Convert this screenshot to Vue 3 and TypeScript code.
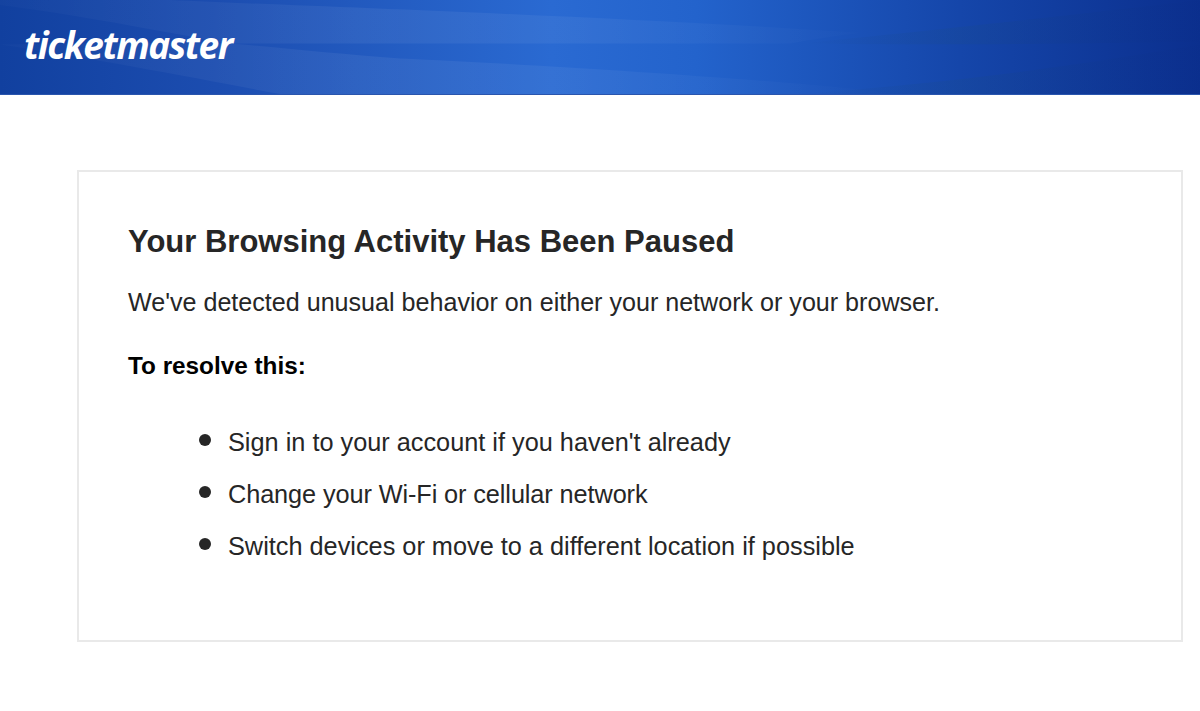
<script setup lang="ts">
const steps = [
  "Sign in to your account if you haven't already",
  'Change your Wi-Fi or cellular network',
  'Switch devices or move to a different location if possible',
]
</script>

<template>
  <div class="page">
    <header class="banner">
      <svg class="swoosh" viewBox="0 0 1200 95" preserveAspectRatio="none" aria-hidden="true">
        <defs>
          <linearGradient id="lightFade" gradientUnits="userSpaceOnUse" x1="0" y1="0" x2="900" y2="0">
            <stop offset="0" stop-color="#fff" stop-opacity="0.015" />
            <stop offset="0.4" stop-color="#fff" stop-opacity="0.06" />
            <stop offset="0.65" stop-color="#fff" stop-opacity="0.05" />
            <stop offset="1" stop-color="#fff" stop-opacity="0" />
          </linearGradient>
          <linearGradient id="darkFade" gradientUnits="userSpaceOnUse" x1="800" y1="0" x2="1200" y2="0">
            <stop offset="0" stop-color="#1a4a90" stop-opacity="0" />
            <stop offset="0.4" stop-color="#1a4a90" stop-opacity="0.3" />
            <stop offset="1" stop-color="#0a2a80" stop-opacity="0.05" />
          </linearGradient>
        </defs>
        <path d="M170 0C300 6 600 16 860 33C830 37 810 40 790 44H230C150 30 80 15 0 5V0Z" fill="url(#lightFade)" />
        <path d="M0 45C100 60 200 80 280 95H900C800 82 550 66 400 59C340 55 280 48 230 44C150 43 80 43 0 45Z" fill="url(#lightFade)" />
        <path d="M800 44C900 34 1050 18 1200 0V42C1100 44 950 46 800 44Z" fill="url(#darkFade)" />
        <path d="M820 93C950 84 1080 66 1200 45V95H820Z" fill="url(#darkFade)" />
      </svg>
      <span class="logo">ticketmaster</span>
    </header>

    <main class="content">
      <section class="card">
        <h1>Your Browsing Activity Has Been Paused</h1>
        <p class="lead">We've detected unusual behavior on either your network or your browser.</p>
        <p class="resolve">To resolve this:</p>
        <ul>
          <li v-for="step in steps" :key="step">
            <span class="dot"></span>
            <span>{{ step }}</span>
          </li>
        </ul>
      </section>
    </main>
  </div>
</template>

<style>
html,
body {
  margin: 0;
  background: #fff;
}
</style>

<style scoped>
.page {
  height: 711px;
  overflow: hidden;
  font-family: "Liberation Sans", Arial, sans-serif;
  color: #262626;
}

.banner {
  position: relative;
  height: 95px;
  box-sizing: border-box;
  padding: 21px 0 0 24px;
  background: linear-gradient(90deg, #11409f 0%, #1c4db0 18%, #2a6ad2 46%, #2363cc 58%, #1546aa 80%, #0b2f8e 100%);
  border-bottom: 1px solid #2a55ad;
}

.swoosh {
  position: absolute;
  inset: 0;
  width: 100%;
  height: 100%;
}

.logo {
  position: relative;
  display: block;
  font-family: "Open Sans", sans-serif;
  font-size: 37px;
  line-height: 48px;
  font-style: italic;
  font-weight: 700;
  letter-spacing: -1.45px;
  color: #fff;
}

.content {
  padding: 75px 17px 0 77px;
}

.card {
  box-sizing: border-box;
  height: 472px;
  padding: 50px 49px 0;
  border: 2px solid #e9e9e9;
}

h1 {
  margin: 0;
  font-size: 31px;
  line-height: 40px;
  font-weight: 700;
  color: #262626;
}

.lead {
  margin: 24px 0 0;
  font-size: 25.1px;
  line-height: 32px;
}

.resolve {
  margin: 32px 0 0;
  font-size: 24.3px;
  line-height: 32px;
  font-weight: 700;
  color: #000;
}

ul {
  margin: 44px 0 0;
  padding: 0 0 0 71px;
  list-style: none;
}

li {
  display: flex;
  align-items: center;
  gap: 17px;
  font-size: 25.3px;
  line-height: 32px;
  margin-bottom: 20px;
}

li:nth-child(2) {
  letter-spacing: -0.1px;
}

.dot {
  flex: none;
  width: 12px;
  height: 12px;
  margin-top: -5px;
  border-radius: 50%;
  background: #262626;
}
</style>
